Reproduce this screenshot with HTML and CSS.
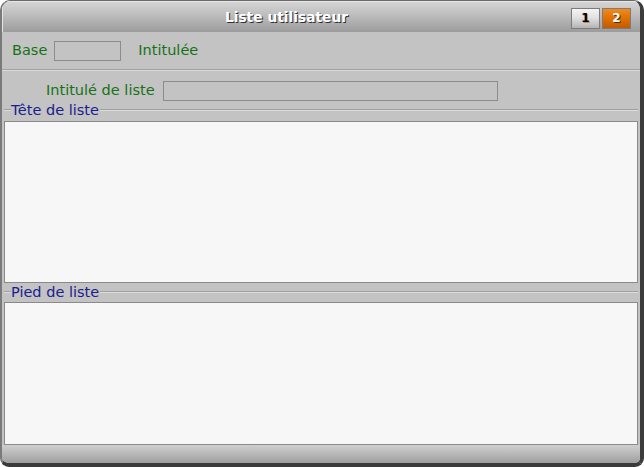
FILE: index.html
```html
<!DOCTYPE html>
<html lang="fr">
<head>
<meta charset="utf-8">
<title>Liste utilisateur</title>
<link rel="stylesheet" href="styles.css">
</head>
<body>
<div class="window">
  <div class="titlebar">
    <div class="title">Liste utilisateur</div>
    <div class="tabs">
      <div class="tab tab-off">1</div>
      <div class="tab tab-on">2</div>
    </div>
  </div>
  <div class="row row1">
    <span class="label">Base</span>
    <span class="field field-base"></span>
    <span class="label label-intitulee">Intitulée</span>
  </div>
  <div class="sep"></div>
  <div class="row row2">
    <span class="label">Intitulé de liste</span>
    <span class="field field-liste"></span>
  </div>
  <div class="group group1"><span class="legend">Tête de liste</span></div>
  <div class="panel panel1"></div>
  <div class="group group2"><span class="legend">Pied de liste</span></div>
  <div class="panel panel2"></div>
  <div class="footer"></div>
</div>
</body>
</html>
```

FILE: styles.css
```css
html, body {
  margin: 0;
  padding: 0;
  background: #ffffff;
}

.window {
  width: 644px;
  height: 467px;
  box-sizing: border-box;
  border-top: 1px solid #6a6a6a;
  border-left: 2px solid #7a7a7a;
  border-right: 4px solid #3c3c3c;
  border-bottom: 4px solid #3a3a3a;
  border-radius: 10px 10px 9px 9px;
  background: #c3c3c3;
  display: flex;
  flex-direction: column;
  overflow: hidden;
  font-family: "DejaVu Sans", Verdana, sans-serif;
  font-size: 14.5px;
}

.titlebar {
  height: 31px;
  flex: none;
  display: flex;
  align-items: flex-start;
  background: linear-gradient(to bottom, #d6d6d6 0%, #bdbdbd 45%, #9c9c9c 100%);
  box-shadow: inset 1px 1px 0 #e6e6e6;
}

.title {
  flex: 1;
  text-align: center;
  padding-top: 7px;
  font-weight: bold;
  font-size: 13.8px;
  line-height: 18px;
  color: #ffffff;
  text-shadow: 1px 1px 0 #303030;
}

.tabs {
  display: flex;
  gap: 2px;
  margin-top: 7px;
  margin-right: 9px;
}

.tab {
  width: 29px;
  height: 21px;
  box-sizing: border-box;
  border: 1px solid #7c7c7c;
  text-align: center;
  font-weight: bold;
  font-size: 12px;
  line-height: 19px;
}

.tab-off {
  background: linear-gradient(to bottom, #f4f4f4 0%, #e2e2e2 45%, #b4b4b4 100%);
  color: #000000;
  text-shadow: 1px 1px 0 #d08a40;
}

.tab-on {
  background: linear-gradient(to bottom, #f08a20 0%, #e07000 50%, #c45a00 100%);
  color: #ffffff;
  text-shadow: 1px 1px 0 #4a3010;
}

.row {
  flex: none;
  display: flex;
  align-items: center;
}

.row1 {
  height: 37px;
  padding-left: 10px;
  align-items: flex-start;
  box-sizing: border-box;
  padding-top: 9px;
}

.row2 {
  height: 30px;
  padding-left: 44px;
  align-items: flex-start;
  box-sizing: border-box;
  padding-top: 10px;
}

.label {
  color: #167216;
  line-height: 19px;
  white-space: nowrap;
}

.field {
  display: block;
  height: 20px;
  box-sizing: border-box;
  border: 1px solid #8c8c8c;
  background: #c3c3c3;
}

.field-base {
  width: 67px;
  margin-left: 7px;
}

.label-intitulee {
  margin-left: 17px;
}

.field-liste {
  width: 335px;
  margin-left: 8px;
}

.sep {
  flex: none;
  height: 2px;
  background: linear-gradient(to bottom, #a2a2a2 0 1px, #dadada 1px 2px);
}

.group {
  flex: none;
  padding-left: 7px;
  margin: 0 2px;
  box-sizing: border-box;
  background: linear-gradient(to bottom,
    transparent 0 8px,
    #a0a0a0 8px 9px,
    #dcdcdc 9px 10px,
    transparent 10px);
}

.group1 {
  height: 20px;
}

.group2 {
  height: 19px;
}

.legend {
  display: inline-block;
  background: #c3c3c3;
  color: #1c1c8e;
  line-height: 18px;
  padding: 0 1px 0 0;
}

.panel {
  flex: none;
  margin: 0 2px;
  box-sizing: border-box;
  background: #f7f7f7;
  border: 1px solid #8a8a8a;
}

.panel1 {
  height: 162px;
}

.panel2 {
  height: 143px;
}

.footer {
  flex: 1;
  background: linear-gradient(to bottom, #cfcfcf 0%, #b8b8b8 50%, #9e9e9e 100%);
}
```
